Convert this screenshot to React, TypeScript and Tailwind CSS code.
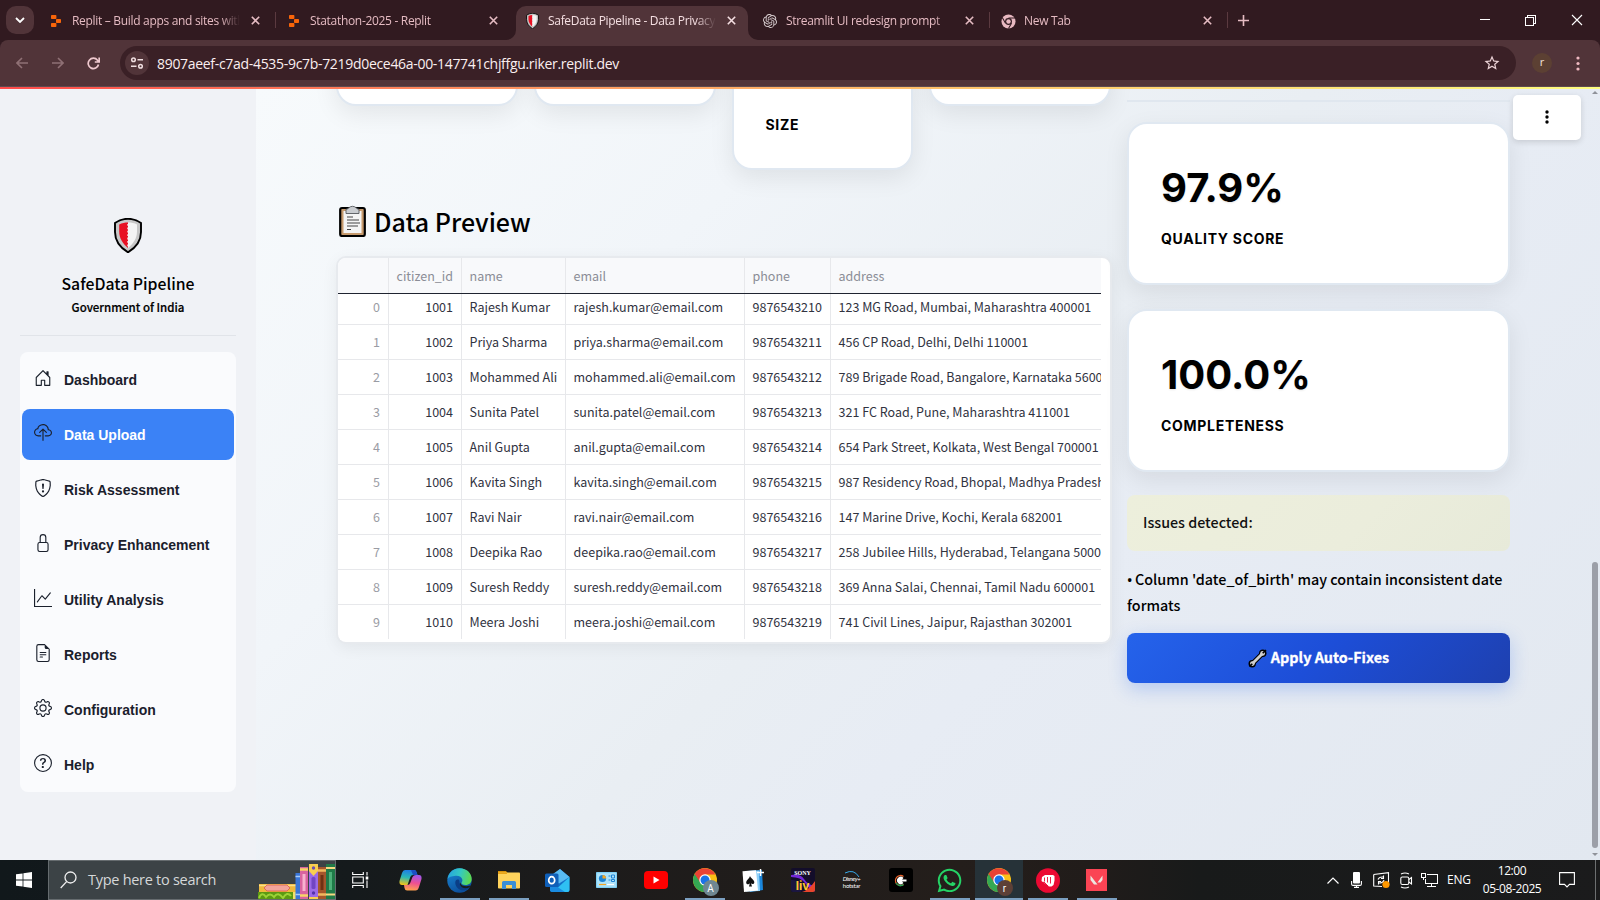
import React from "react";
import {
  BsHouseDoor,
  BsCloudUpload,
  BsShieldExclamation,
  BsLock,
  BsGraphUp,
  BsFileEarmarkText,
  BsGear,
  BsQuestionCircle,
} from "react-icons/bs";
import { SiOpenai } from "react-icons/si";
import { FaWhatsapp } from "react-icons/fa";
import { MdStarOutline } from "react-icons/md";

/* ---------- drawings ---------- */

function ReplitLogo() {
  return (
    <svg width="10" height="12" viewBox="0 0 10 12" fill="#f8650a">
      <rect x="0" y="0" width="5.4" height="4" rx="0.8" />
      <rect x="5" y="4" width="5" height="4" rx="0.8" />
      <rect x="0" y="8" width="5.4" height="4" rx="0.8" />
    </svg>
  );
}

function Shield({ className }: { className: string }) {
  return (
    <svg className={className} viewBox="0 0 28 35">
      <path d="M14 0.8C18 0.8 23 2 27 5V14C27 22 22 29.5 14 34.3C6 29.5 1 22 1 14V5C5 2 10 .8 14 .8Z" fill="#c8c8c8" stroke="#000" strokeWidth="1.9" />
      <path d="M14 4.6V30C8.5 25.500 5.200 20 5.200 13.500V6.600C8 5.200 11 4.600 14 4.600Z" fill="#e81123" />
      <path d="M14 4.600C17.500 4.600 20.500 5.200 23 6.600V13.500C23 20 19.500 25.500 14 30Z" fill="#f4f4f4" />
      <path d="M14.300 6V29" stroke="#f4f4f4" strokeWidth="2" strokeDasharray="1.8 1.600" />
    </svg>
  );
}

function ChromeMono() {
  return (
    <svg width="15" height="15" viewBox="0 0 16 16">
      <circle cx="8" cy="8" r="7.500" fill="#e8b9c1" />
      <circle cx="8" cy="8" r="3.700" fill="#311a20" />
      <circle cx="8" cy="8" r="2.400" fill="#e8b9c1" />
      <path d="M8 4.300H15M4.800 9.800L1.500 4M11.200 9.800L8 15.500" stroke="#311a20" strokeWidth="1.100" />
    </svg>
  );
}

function ChromeColor({ letter, badge }: { letter: string; badge: string }) {
  return (
    <div className="relative size-6">
      <svg width="24" height="24" viewBox="0 0 24 24">
        <circle cx="12" cy="12" r="12" fill="#fbc116" />
        <path d="M1.610 6A12 12 0 0 0 12 24L17.200 15L12 12Z" fill="#34a853" />
        <path d="M1.610 6L6.800 15L12 12Z" fill="#34a853" />
        <path d="M1.610 6A12 12 0 0 1 22.390 6.500H12L7 14Z" fill="#ea4335" />
        <circle cx="12" cy="12" r="5.700" fill="#fff" />
        <circle cx="12" cy="12" r="4.500" fill="#1a73e8" />
      </svg>
      <span
        className={
          "absolute -right-[2px] -bottom-[4px] flex size-4 items-center justify-center rounded-full font-['Roboto',sans-serif] text-[10px] text-white " +
          badge
        }
      >
        {letter}
      </span>
    </div>
  );
}

function Clipboard() {
  return (
    <svg width="27" height="32" viewBox="0 0 27 32">
      <rect x="1.200" y="3" width="24.600" height="28" rx="1.800" fill="#c69a6d" stroke="#000" strokeWidth="2.200" />
      <rect x="4.500" y="6" width="18" height="22" fill="#f4f4f4" />
      <path d="M7 4.300C9.500 4.300 10 1.300 13.500 1.300S17.500 4.300 20 4.300V8.500H7Z" fill="#c9ccd0" stroke="#55585c" strokeWidth="0.900" />
      <path d="M8 12H14M8 15H20M8 18H21M8 21H19M8 24.500H12" stroke="#444" strokeWidth="1.100" />
    </svg>
  );
}

function Wrench() {
  return (
    <svg width="19" height="19" viewBox="0 0 19 19">
      <path d="M4 15L15 4" stroke="#000" strokeWidth="5" />
      <circle cx="4.200" cy="14.800" r="3.700" fill="#000" />
      <circle cx="14.800" cy="4.200" r="3.700" fill="#000" />
      <path d="M4 15L15 4" stroke="#cfcfcf" strokeWidth="2.800" />
      <circle cx="4.400" cy="14.600" r="2.400" fill="#cfcfcf" />
      <circle cx="14.600" cy="4.400" r="2.400" fill="#cfcfcf" />
      <path d="M1.500 17.500L4.300 14.700M14.700 4.300L18 1" stroke="#000" strokeWidth="1.600" />
    </svg>
  );
}

function Books() {
  return (
    <svg width="77" height="36" viewBox="0 0 77 36">
      <rect x="1" y="21" width="37" height="8" fill="#f0b93c" />
      <path d="M1 22.500H38" stroke="#fbe08a" strokeWidth="1.500" />
      <path d="M9 22H29L32 25L29 28H9L6 25Z" fill="#f2a49b" stroke="#d9584f" strokeWidth="0.800" />
      <rect x="0" y="29" width="38" height="7" fill="#5c9a12" />
      <path d="M1 35Q4 28 8 34Q12 29 16 34Q20 28 25 35Q29 28 33 33" stroke="#9cd236" strokeWidth="2" fill="none" />
      <rect x="35" y="29" width="3" height="7" fill="#f3e06a" />
      <rect x="37.500" y="10" width="4.500" height="26" fill="#3a76d8" />
      <path d="M37.500 13.500H42M37.500 31.500H42" stroke="#a9cdf7" strokeWidth="1.500" />
      <rect x="42" y="4" width="8" height="32" fill="#d9639f" />
      <rect x="44.500" y="11" width="3" height="17" fill="#f7b1cf" />
      <path d="M42 6.500H50M42 32.500H50" stroke="#f8d468" strokeWidth="2.500" />
      <rect x="51" y="1" width="9" height="35" fill="#9b6ae6" />
      <path d="M51 1H60V8L55.500 13L51 8Z" fill="#f8cf4f" />
      <rect x="53.500" y="14" width="4" height="12" rx="1.500" fill="#7145c4" />
      <circle cx="55.500" cy="5" r="1.700" fill="#6c50b0" />
      <circle cx="55.500" cy="30" r="1.700" fill="#5532a8" />
      <path d="M51 35H60" stroke="#f8cf4f" strokeWidth="2" />
      <rect x="60" y="4" width="8" height="32" fill="#a5562c" />
      <rect x="62.500" y="12" width="3" height="15" fill="#6f3113" />
      <path d="M60 7.500H68M60 31.500H68" stroke="#f1b95e" strokeWidth="2.500" />
      <rect x="68" y="1" width="9" height="35" fill="#1f7a48" />
      <rect x="71" y="9" width="3" height="18" fill="#4eb079" />
      <path d="M68 5H77M68 31.500H77" stroke="#f5d982" strokeWidth="2" />
    </svg>
  );
}

function Edge() {
  return (
    <svg width="25" height="25" viewBox="0 0 25 25">
      <defs>
        <linearGradient id="edgeTop" x1="0" y1="0.300" x2="1" y2="0.500">
          <stop offset="0" stopColor="#26a5de" />
          <stop offset="0.500" stopColor="#34c9c2" />
          <stop offset="1" stopColor="#5fd94b" />
        </linearGradient>
        <linearGradient id="edgeLow" x1="0" y1="0" x2="0.500" y2="1">
          <stop offset="0" stopColor="#1b8bd8" />
          <stop offset="1" stopColor="#0c4f9c" />
        </linearGradient>
      </defs>
      <circle cx="12.500" cy="12.500" r="12.200" fill="url(#edgeLow)" />
      <path d="M.6 11C1.500 4.500 6.500 .3 12.500 .3C20 .3 24.700 5.500 24.700 11C24.700 14.800 22 17 18.500 17C15.500 17 14.300 15.800 14.500 14.800C14.800 13.900 15.700 13.500 15.300 11.500C14.800 9 12 7.500 8.500 7.800C4.500 8 1.500 9.500 .6 11Z" fill="url(#edgeTop)" />
      <path d="M8.300 14C8 19 12 22.500 17 22.300C19.500 22.200 21.500 21 22.700 19.500C20 21 14.500 20 13 16.500C12 14.300 13 12 11.500 11.500C9.500 11 8.400 12.500 8.300 14Z" fill="#0b3e86" />
      <path d="M13.500 14C13 17 17 19.300 23.500 17.500L22.300 19.600C18 21.500 13.500 19.500 12.800 16Z" fill="#1a1c1e" />
    </svg>
  );
}

function Copilot() {
  return (
    <svg width="23" height="22" viewBox="0 0 23 22">
      <defs>
        <linearGradient id="cpA" x1="0.500" y1="0" x2="0.300" y2="1">
          <stop offset="0" stopColor="#1e7be8" />
          <stop offset="0.500" stopColor="#2bb8b5" />
          <stop offset="1" stopColor="#f3c418" />
        </linearGradient>
        <linearGradient id="cpB" x1="0.600" y1="0" x2="0.400" y2="1">
          <stop offset="0" stopColor="#a057ea" />
          <stop offset="0.500" stopColor="#ee4f93" />
          <stop offset="1" stopColor="#ffa24d" />
        </linearGradient>
      </defs>
      <path d="M6 1H15Q17 1 17.500 3L18.500 6H14Q12 6 11.300 8L8.500 16H3Q0 16 .5 12L3 4Q4 1 6 1Z" fill="url(#cpA)" />
      <path d="M17 6H20Q23 6 22.500 10L20 18Q19 21.500 16.500 21.500H8Q6 21.500 5.500 19L5 16H8.500Q10.500 16 11.200 14L13.500 8Q14.500 6 17 6Z" fill="url(#cpB)" />
      <path d="M12 1H15Q17 1 17.500 3L18.500 6H14Z" fill="#1b4fc4" />
    </svg>
  );
}

function Explorer() {
  return (
    <svg width="22" height="20" viewBox="0 0 22 20">
      <path d="M0 1H8L10 3.500H0Z" fill="#d9920b" />
      <rect x="0" y="2.500" width="22" height="16" rx="0.800" fill="#ffd35c" />
      <path d="M0 2.500H9V4H0Z" fill="#e8a317" />
      <path d="M4 19V12.500Q4 11 5.500 11H16.500Q18 11 18 12.500V19H14V15H8V19Z" fill="#3b8fd6" />
    </svg>
  );
}

function Outlook() {
  return (
    <svg width="25" height="25" viewBox="0 0 25 25">
      <path d="M5 9L15 1L24.500 9V22Q24.500 24 22.500 24H8Q5 24 5 22Z" fill="#1471c9" />
      <path d="M8 6L15 1L24.500 9L14 15.500L8 12Z" fill="#58baf2" />
      <path d="M24.500 9V22Q24.500 24 22.500 24H8Z" fill="#2fc0f3" />
      <path d="M5 14L20 24H8Q5 24 5 22Z" fill="#1a8be0" />
      <rect x="0" y="5.500" width="13.500" height="13.500" rx="1.500" fill="#0f5fb8" />
      <ellipse cx="6.700" cy="12.200" rx="3" ry="3.500" fill="none" stroke="#fff" strokeWidth="1.700" />
    </svg>
  );
}

function ControlPanel() {
  return (
    <svg width="21" height="16" viewBox="0 0 21 16">
      <rect width="21" height="16" rx="0.800" fill="#7fd0f5" />
      <rect x="1.200" y="1.200" width="18.600" height="13.600" fill="#aee3fa" />
      <circle cx="6.500" cy="6.500" r="3.600" fill="#1c84d6" />
      <path d="M6.500 6.500V2.900A3.600 3.600 0 0 1 10.100 6.500Z" fill="#f5a623" />
      <path d="M12.500 4H14.500M12.500 8H14.500M15.500 3H18.500V6H15.500ZM15.500 7.500H18.500V9.500H15.500Z" stroke="#1c84d6" fill="none" />
      <path d="M3 12.500H10" stroke="#f5a623" strokeWidth="1.200" />
      <path d="M11 12.500H18" stroke="#fff" strokeWidth="1.200" />
    </svg>
  );
}

function YouTube() {
  return (
    <svg width="24" height="18" viewBox="0 0 24 18">
      <rect width="24" height="18" rx="4" fill="#f00" />
      <path d="M9.500 5.500L15.500 9L9.500 12.500Z" fill="#fff" />
    </svg>
  );
}

function Solitaire() {
  return (
    <svg width="23" height="25" viewBox="0 0 23 25">
      <path d="M6 3L20 2L21 22L8 24Z" fill="#1a86dc" />
      <path d="M3 3L17 2.500L18 23L4 23.500Z" fill="#8fd1f8" />
      <path d="M.5 3.200L14 2.200L16 22.500L2 24Z" fill="#fff" />
      <path d="M8 8C9 10.500 12.500 12 12.300 14.500C12 16.500 9.800 16.500 9 15.300L10 18.500H7L7.800 15.300C7 16.800 4.500 16.700 4.200 14.800C4 12.300 7.200 11 8 8Z" fill="#111" />
      <path d="M18.500 1V8M15 4.500H22" stroke="#fff" strokeWidth="1.500" />
    </svg>
  );
}

function SonyLiv() {
  return (
    <div className="relative flex h-6 w-6 flex-col items-center justify-between overflow-hidden rounded-[2px] bg-[#130d2a] font-bold">
      <svg className="absolute inset-0" width="24" height="24" viewBox="0 0 24 24">
        <path d="M0 9Q10 9 14 15T24 24V18Q17 17 13 11T0 7Z" fill="#7428d8" />
        <path d="M11 24Q18 22 24 13V24Z" fill="#e8452c" />
        <path d="M0 12Q8 11 12 18L10 24H0Z" fill="#1b1640" />
      </svg>
      <span className="relative font-['Liberation_Serif',serif] text-[6px] leading-[10px] text-white">SONY</span>
      <span className="relative font-['Inter',sans-serif] text-[12px] leading-[12px] text-[#ffc531]">liv</span>
    </div>
  );
}

function Hotstar() {
  return (
    <div className="relative flex h-6 w-6 flex-col items-center justify-center font-['Lato',sans-serif] text-[6px] leading-[7px] text-white">
      <svg className="absolute top-[2px] left-[4px]" width="16" height="8" viewBox="0 0 16 8">
        <path d="M1 3Q10 -1.500 15 7" stroke="#36a9e8" strokeWidth="1" fill="none" />
      </svg>
      <span className="pt-[3px] italic tracking-[-0.400px]">Disney+</span>
      <span className="tracking-[-0.200px]">hotstar</span>
    </div>
  );
}

function Cricket() {
  return (
    <div className="flex size-6 items-center justify-center rounded-[3px] bg-black">
      <svg width="13" height="13" viewBox="0 0 13 13">
        <path d="M9.500 2.500A5 5 0 1 0 9.500 10.500" stroke="#e8632b" strokeWidth="1.300" fill="none" />
        <path d="M2 9A5 5 0 0 0 9.500 10.500" stroke="#23a455" strokeWidth="1.300" fill="none" />
        <path d="M9.500 4A3.700 3.700 0 1 0 9.500 9L8 7.500H12.500V5.500H8Z" fill="#fff" />
      </svg>
    </div>
  );
}

function Fist() {
  return (
    <svg width="24" height="25" viewBox="0 0 24 25">
      <ellipse cx="12" cy="12.500" rx="12" ry="12.300" fill="#eb0a33" />
      <path d="M6 9L9 7L17 7L18.500 8V12.500L17.500 17L15.500 18.500H13L5.500 13Z" fill="#fff" />
      <path d="M8.500 9.500V13.500M11.500 9V14.500M14.500 9V15.500M5 16L8 14L12 18" stroke="#eb0a33" strokeWidth="0.900" fill="none" />
    </svg>
  );
}

function Valorant() {
  return (
    <svg width="21" height="22" viewBox="0 0 21 22">
      <rect width="21" height="22" fill="#fa4454" />
      <path d="M4.500 6.500L11.500 15.500H8L4.500 11ZM16.500 6.500V11L14.500 13.500H11.500Z" fill="#ece8e1" />
    </svg>
  );
}

/* ---------- browser chrome ---------- */

type Tab = { title: string; icon: React.ReactNode; active?: boolean; divider?: boolean };

const tabs: Tab[] = [
  { title: "Replit – Build apps and sites with AI", icon: <ReplitLogo />, divider: true },
  { title: "Statathon-2025 - Replit", icon: <ReplitLogo /> },
  { title: "SafeData Pipeline - Data Privacy Tool", icon: <Shield className="h-4 w-[13px]" />, active: true },
  { title: "Streamlit UI redesign prompt", icon: <SiOpenai size={14} color="#d9cfd1" />, divider: true },
  { title: "New Tab", icon: <ChromeMono />, divider: true },
];

function Cross({ color }: { color: string }) {
  return (
    <svg width="9" height="9" viewBox="0 0 9 9" stroke={color} strokeWidth="1.600">
      <path d="M.8 .8L8.200 8.200M8.200 .8L.8 8.200" />
    </svg>
  );
}

function TabItem({ tab }: { tab: Tab }) {
  return (
    <div className="relative flex h-[34px] w-[238px] shrink-0">
      <div
        className={
          "relative flex w-[232px] items-center rounded-t-[10px] pl-2 " +
          (tab.active ? "bg-[#513439] text-[#f5dfe2]" : "text-[#e6bcc3]")
        }
      >
        {tab.active && (
          <>
            <svg className="absolute bottom-0 -left-[10px]" width="10" height="10" viewBox="0 0 10 10">
              <path d="M10 0V10H0A10 10 0 0 0 10 0Z" fill="#513439" />
            </svg>
            <svg className="absolute -right-[10px] bottom-0" width="10" height="10" viewBox="0 0 10 10">
              <path d="M0 0V10H10A10 10 0 0 1 0 0Z" fill="#513439" />
            </svg>
          </>
        )}
        <span className="flex w-4 shrink-0 justify-center pb-[6px] pt-[2px]">{tab.icon}</span>
        <span className="ml-2 w-[168px] overflow-hidden whitespace-nowrap pb-[4px] font-['Open_Sans',sans-serif] text-[12px] leading-5 tracking-[-0.310px] [mask-image:linear-gradient(to_right,black_88%,transparent)]">
          {tab.title}
        </span>
        <span className="ml-[11px] pb-[5px]">
          <Cross color={tab.active ? "#f5dfe2" : "#e6bcc3"} />
        </span>
      </div>
      {tab.divider && <span className="mt-[6px] ml-[3px] h-4 w-px bg-[#5b3a40]" />}
    </div>
  );
}

function BrowserChrome() {
  return (
    <header className="relative z-10 h-[87px] shrink-0 bg-[#311a20]">
      <div className="flex h-10 items-start pt-[6px]">
        <div className="ml-[6px] flex size-7 shrink-0 items-center justify-center rounded-[10px] bg-[#513439]">
          <svg width="10" height="6" viewBox="0 0 10 6" fill="none" stroke="#fff" strokeWidth="1.800">
            <path d="M1 1L5 5L9 1" />
          </svg>
        </div>
        <div className="ml-[6px] flex">
          {tabs.map((t) => (
            <TabItem key={t.title} tab={t} />
          ))}
        </div>
        <svg className="mt-[9px] ml-[8px]" width="11" height="11" viewBox="0 0 11 11" stroke="#e6bcc3" strokeWidth="1.600">
          <path d="M5.500 0V11M0 5.500H11" />
        </svg>
        <div className="ml-auto flex items-center pt-[8px] pr-[17px] text-white">
          <svg width="10" height="12" viewBox="0 0 10 12" stroke="currentColor" shapeRendering="crispEdges">
            <path d="M0 5.500H10" />
          </svg>
          <svg className="ml-[35px]" width="11" height="12" viewBox="0 0 11 12" fill="none" stroke="currentColor" shapeRendering="crispEdges">
            <path d="M.5 3.500H8.500V11H.5ZM2.500 3.500V1H10.500V9H8.500" />
          </svg>
          <svg className="ml-[35px]" width="12" height="12" viewBox="0 0 12 12" stroke="currentColor" strokeWidth="1.100">
            <path d="M1 1L11 11M11 1L1 11" />
          </svg>
        </div>
      </div>
      <div className="flex h-[47px] items-center rounded-t-[8px] border-b border-[#5d4a50] bg-[#513439]">
        <svg className="ml-[16px]" width="12" height="12" viewBox="0 0 12 12" fill="none" stroke="#8f7075" strokeWidth="1.600">
          <path d="M12 6H1M6 1L1 6L6 11" />
        </svg>
        <svg className="ml-[24px]" width="12" height="12" viewBox="0 0 12 12" fill="none" stroke="#8f7075" strokeWidth="1.600">
          <path d="M0 6H11M6 1L11 6L6 11" />
        </svg>
        <svg className="ml-[23px]" width="13" height="13" viewBox="0 0 13 13" fill="none" stroke="#f0c9cf" strokeWidth="1.700">
          <path d="M11.500 7.500A5.200 5.200 0 1 1 10.500 3.200L12 5M12.200 .5V5H7.800" />
        </svg>
        <div className="ml-[20px] flex h-[34px] w-[1396px] items-center rounded-full bg-[#3a2026]">
          <span className="ml-[5px] flex size-6 items-center justify-center rounded-full bg-[#513439]">
            <svg width="14" height="12" viewBox="0 0 14 12" fill="none" stroke="#f0dfe1" strokeWidth="1.500">
              <circle cx="3.500" cy="2.700" r="1.800" />
              <circle cx="10.500" cy="9.300" r="1.800" />
              <path d="M7.500 2.700H13M1 9.300H6.500" />
            </svg>
          </span>
          <span className="ml-2 whitespace-nowrap font-['Open_Sans',sans-serif] text-[14px] tracking-[-0.310px] text-[#fbeff0]">
            8907aeef-c7ad-4535-9c7b-7219d0ece46a-00-147741chjffgu.riker.replit.dev
          </span>
          <MdStarOutline className="mr-[15px] ml-auto" size={18} color="#ecd3d7" />
        </div>
        <span className="ml-4 flex size-5 items-center justify-center rounded-full bg-[#5c4033] pb-px font-['Open_Sans',sans-serif] text-[11px] text-[#f3e2d8]">
          r
        </span>
        <svg className="ml-[24px]" width="4" height="15" viewBox="0 0 4 15" fill="#efb9c1">
          <circle cx="2" cy="2" r="1.600" />
          <circle cx="2" cy="7.500" r="1.600" />
          <circle cx="2" cy="13" r="1.600" />
        </svg>
      </div>
    </header>
  );
}

/* ---------- sidebar ---------- */

const menu = [
  { label: "Dashboard", Icon: BsHouseDoor },
  { label: "Data Upload", Icon: BsCloudUpload, active: true },
  { label: "Risk Assessment", Icon: BsShieldExclamation },
  { label: "Privacy Enhancement", Icon: BsLock },
  { label: "Utility Analysis", Icon: BsGraphUp },
  { label: "Reports", Icon: BsFileEarmarkText },
  { label: "Configuration", Icon: BsGear },
  { label: "Help", Icon: BsQuestionCircle },
];

function Sidebar() {
  return (
    <aside className="flex w-64 shrink-0 flex-col bg-[#f0f2f6] px-5 font-['Noto_Sans_CJK_SC',sans-serif]">
      <Shield className="mt-[129px] h-[35px] w-7 self-center" />
      <h2 className="mt-[19px] text-center text-[15.800px] leading-6 font-medium text-black">SafeData Pipeline</h2>
      <p className="mt-px text-center text-[11.500px] leading-5 font-medium text-black [-webkit-text-stroke:0.200px_black]">
        Government of India
      </p>
      <hr className="mt-[18px] border-t border-[#e1e4e9]" />
      <nav className="mt-[16px] flex h-[440px] flex-col gap-1 rounded-lg bg-[#fafbfd] px-[2px] pt-[2px]">
        {menu.map(({ label, Icon, active }) => (
          <a
            key={label}
            className={
              "flex h-[51px] shrink-0 items-center rounded-lg pl-3 font-['Liberation_Sans',Arial,sans-serif] text-[14px] font-bold " +
              (active ? "bg-[#3b82f6] text-white" : "text-[#1a202c]")
            }
          >
            <Icon size={18} color="#1a202c" className="mb-1" />
            <span className="mt-[2px] ml-3">{label}</span>
          </a>
        ))}
      </nav>
    </aside>
  );
}

/* ---------- main content ---------- */

const rows = [
  ["1001", "Rajesh Kumar", "rajesh.kumar@email.com", "9876543210", "123 MG Road, Mumbai, Maharashtra 400001"],
  ["1002", "Priya Sharma", "priya.sharma@email.com", "9876543211", "456 CP Road, Delhi, Delhi 110001"],
  ["1003", "Mohammed Ali", "mohammed.ali@email.com", "9876543212", "789 Brigade Road, Bangalore, Karnataka 560001"],
  ["1004", "Sunita Patel", "sunita.patel@email.com", "9876543213", "321 FC Road, Pune, Maharashtra 411001"],
  ["1005", "Anil Gupta", "anil.gupta@email.com", "9876543214", "654 Park Street, Kolkata, West Bengal 700001"],
  ["1006", "Kavita Singh", "kavita.singh@email.com", "9876543215", "987 Residency Road, Bhopal, Madhya Pradesh 462001"],
  ["1007", "Ravi Nair", "ravi.nair@email.com", "9876543216", "147 Marine Drive, Kochi, Kerala 682001"],
  ["1008", "Deepika Rao", "deepika.rao@email.com", "9876543217", "258 Jubilee Hills, Hyderabad, Telangana 500001"],
  ["1009", "Suresh Reddy", "suresh.reddy@email.com", "9876543218", "369 Anna Salai, Chennai, Tamil Nadu 600001"],
  ["1010", "Meera Joshi", "meera.joshi@email.com", "9876543219", "741 Civil Lines, Jaipur, Rajasthan 302001"],
];

const grid = "grid grid-cols-[51px_73px_104px_179px_86px_270px] w-[763px]";
const cell = "overflow-hidden whitespace-nowrap border-r border-[#e7e8eb] pl-[7.500px] pr-2 pt-[2px] flex items-center";
const lastCell = "overflow-hidden whitespace-nowrap pl-[7.500px] pt-[2px] flex items-center";

function DataTable() {
  return (
    <div className="-ml-px h-[388px] w-[776px] shrink-0 overflow-hidden rounded-[10px] border-2 border-[#e7eaee] bg-white font-['Noto_Sans_CJK_SC',sans-serif] text-[12.520px] text-[#31333f] shadow-[0_4px_16px_rgba(0,0,0,0.06)]">
      <div className={grid + " h-9 border-b border-[#1f2430] bg-[#f8f9fb] text-[#8b8d96]"}>
        <div className={cell} />
        <div className={cell + " pr-0"}>citizen_id</div>
        <div className={cell}>name</div>
        <div className={cell}>email</div>
        <div className={cell}>phone</div>
        <div className={lastCell}>address</div>
      </div>
      {rows.map(([id, name, email, phone, address], i) => (
        <div
          key={id}
          className={
            "flex w-[763px] items-end overflow-hidden border-b " +
            (i === 0 ? "h-[31px] " : "h-[35px] ") +
            (i < 9 ? "border-[#e7e8eb]" : "border-white")
          }
        >
          <div className={grid + " h-[35px] shrink-0"}>
            <div className={cell + " justify-end text-[#9a9ca4]"}>{i}</div>
            <div className={cell + " justify-end"}>{id}</div>
            <div className={cell}>{name}</div>
            <div className={cell}>{email}</div>
            <div className={cell}>{phone}</div>
            <div className={lastCell}>{address}</div>
          </div>
        </div>
      ))}
    </div>
  );
}

const cardFrame =
  "border-2 border-[#e0e8f1] bg-white shadow-[0_8px_24px_rgba(0,0,0,0.08)]";

function MetricCard({ value, label }: { value: string; label: string }) {
  return (
    <div className={cardFrame + " h-[163px] rounded-[20px] pt-[39px] pl-8 font-['Inter',sans-serif] text-black"}>
      <div className="text-[40px] leading-[50px] font-bold [text-shadow:0_1px_2px_rgba(0,0,0,0.1)]">{value}</div>
      <div className="mt-[16px] text-[14px] leading-5 font-bold tracking-[0.7px]">{label}</div>
    </div>
  );
}

function Main() {
  return (
    <main className="relative flex flex-1 gap-[17px] bg-[linear-gradient(135deg,#f7fafc_0%,#f1f5f9_27%,#e9eef3_50%,#e7ecf4_62%,#e2e8f0_100%)] pl-[81px] font-['Noto_Sans_CJK_SC',sans-serif] text-black">
      <section className="flex w-[773px] flex-col">
        <div className="-ml-px grid h-[81px] w-[775px] grid-cols-4 items-start gap-4">
          <div className={cardFrame + " -mt-8 h-[49px] rounded-b-[20px]"} />
          <div className={cardFrame + " -mt-8 h-[49px] rounded-b-[20px]"} />
          <div className={cardFrame + " -mt-8 h-[113px] rounded-b-[20px] pt-[56px] pl-8 font-['Inter',sans-serif] text-[14px] leading-5 font-bold tracking-[0.7px]"}>
            SIZE
          </div>
          <div className={cardFrame + " -mt-8 h-[49px] rounded-b-[20px]"} />
        </div>
        <h3 className="flex h-[86px] items-center gap-[8px] pt-4 pl-[2px] text-[25px] font-medium">
          <span>
            <Clipboard />
          </span>
          <span className="leading-9">Data Preview</span>
        </h3>
        <DataTable />
      </section>

      <section className="flex w-[383px] flex-col">
        <div className="mt-[11px] h-[2px] bg-[#e0e7ef]" />
        <div className="mt-5 flex flex-col gap-6">
          <MetricCard value="97.9%" label="QUALITY SCORE" />
          <MetricCard value="100.0%" label="COMPLETENESS" />
        </div>
        <div className="mt-[23px] flex h-[56px] items-center rounded-lg bg-[linear-gradient(135deg,#edefdc,#ebeddc_60%,#e7ead9)] pb-[2px] pl-4 text-[14.300px] font-medium text-[#111]">
          Issues detected:
        </div>
        <p className="mt-[15px] h-[52px] text-[14.350px] leading-[25.600px] font-medium">
          <span className="inline-block w-2 font-['Noto_Sans',sans-serif] leading-4">•</span>
          Column 'date_of_birth' may contain inconsistent date formats
        </p>
        <button className="mt-[15px] flex h-[50px] items-center justify-center gap-[4px] rounded-lg bg-[linear-gradient(135deg,#2563eb_0%,#1d4ed8_50%,#1e40af_100%)] text-[14.400px] font-bold text-white shadow-[0_6px_18px_rgba(37,99,235,0.25)]">
          <Wrench />
          <span className="pb-[2px] [-webkit-text-stroke:0.300px_white]">Apply Auto-Fixes</span>
        </button>
      </section>

      <button className="absolute top-[6px] right-[19px] flex h-[45px] w-[68px] items-center justify-center rounded-[5px] bg-white pb-px shadow-[0_2px_6px_rgba(0,0,0,0.14)]">
        <svg width="4" height="14" viewBox="0 0 4 14">
          <circle cx="2" cy="2" r="1.700" />
          <circle cx="2" cy="7" r="1.700" />
          <circle cx="2" cy="12" r="1.700" />
        </svg>
      </button>

      <div className="absolute inset-y-0 right-[2px] flex w-[6px] flex-col items-center">
        <svg className="mt-[2px]" width="6" height="3" viewBox="0 0 6 3" fill="#8f9299">
          <path d="M0 3L3 0L6 3Z" />
        </svg>
        <div className="mt-[468px] h-[286px] w-[6px] rounded-full bg-[#9c9fa8]" />
        <svg className="mt-[5px]" width="6" height="3" viewBox="0 0 6 3" fill="#8f9299">
          <path d="M0 0L3 3L6 0Z" />
        </svg>
      </div>
    </main>
  );
}

/* ---------- taskbar ---------- */

function TaskView() {
  return (
    <svg className="mr-[2px]" width="17" height="16" viewBox="0 0 17 16" fill="none" stroke="#fff" strokeWidth="1.100">
      <path d="M.7 0V2.500H11.300V0M.7 5H11.300V11H.7ZM.7 16V13.500H11.300V16M15 0V3.500M15 8.500V16" />
      <rect x="13.700" y="4.500" width="2.600" height="3" fill="#fff" stroke="none" />
    </svg>
  );
}

const apps: { name: string; icon: React.ReactNode; line?: string; active?: boolean }[] = [
  { name: "taskview", icon: <TaskView /> },
  { name: "copilot", icon: <Copilot /> },
  { name: "edge", icon: <Edge />, line: "w-10" },
  { name: "explorer", icon: <Explorer />, line: "w-10" },
  { name: "outlook", icon: <Outlook /> },
  { name: "control", icon: <ControlPanel /> },
  { name: "youtube", icon: <YouTube /> },
  { name: "chromeA", icon: <ChromeColor letter="A" badge="bg-[#6f8792]" />, line: "w-10" },
  { name: "solitaire", icon: <Solitaire /> },
  { name: "sony", icon: <SonyLiv /> },
  { name: "hotstar", icon: <Hotstar /> },
  { name: "cricket", icon: <Cricket /> },
  { name: "whatsapp", icon: <FaWhatsapp size={27} color="#25d366" />, line: "w-10" },
  { name: "chromeR", icon: <ChromeColor letter="r" badge="bg-[#5d4037]" />, line: "w-12", active: true },
  { name: "fist", icon: <Fist />, line: "w-10" },
  { name: "valorant", icon: <Valorant />, line: "w-10" },
];

function Taskbar() {
  return (
    <footer className="flex h-10 shrink-0 bg-[linear-gradient(to_right,#11181b_0%,#151a1c_22%,#1c1b1b_35%,#241e1b_60%,#211c1a_68%,#181a1a_75%,#1b1b1c_100%)] font-['Open_Sans',sans-serif] text-white">
      <div className="flex w-12 items-center justify-center">
        <svg width="16" height="16" viewBox="0 0 16 16" fill="#fff">
          <path d="M0 2.300L6.600 1.400V7.600H0ZM7.400 1.200L16 0V7.600H7.400ZM0 8.400H6.600V14.600L0 13.700ZM7.400 8.400H16V16L7.400 14.800Z" />
        </svg>
      </div>
      <div className="flex w-[288px] items-center border border-[#666c6f] bg-[#3c4346] pl-[11px]">
        <svg width="17" height="18" viewBox="0 0 17 18" fill="none" stroke="#f0f0f0" strokeWidth="1.300">
          <circle cx="10.500" cy="6.500" r="5.500" />
          <path d="M6.600 10.600L.7 17" />
        </svg>
        <span className="ml-[11px] whitespace-nowrap text-[14.500px] tracking-[-0.280px] text-[#d5d8d9]">Type here to search</span>
        <span className="ml-auto self-end">
          <Books />
        </span>
      </div>
      <div className="ml-px flex">
        {apps.map((a) => (
          <div key={a.name} className="flex w-[49px] flex-col items-center">
            <div className={"flex h-[38px] w-12 items-center justify-center pt-[2px] " + (a.active ? "bg-[#263238]" : "")}>
              {a.icon}
            </div>
            {a.line && <div className={"h-[2px] bg-[#7b9fc0] " + a.line} />}
          </div>
        ))}
      </div>
      <div className="ml-auto flex items-center text-[12px]">
        <svg width="12" height="7" viewBox="0 0 12 7" fill="none" stroke="#fff" strokeWidth="1.200">
          <path d="M.5 6.500L6 1L11.500 6.500" />
        </svg>
        <svg className="ml-[12px]" width="11" height="16" viewBox="0 0 11 16">
          <rect x="2" y="0" width="7" height="11.500" rx="1" fill="#fff" />
          <path d="M.6 9V12Q.6 13.400 2 13.400H9Q10.400 13.400 10.400 12V9M5.500 13.400V15.400M3 15.400H8" stroke="#fff" fill="none" strokeWidth="1.100" />
        </svg>
        <svg className="ml-[11px]" width="18" height="17" viewBox="0 0 18 17" fill="none" stroke="#fff" strokeWidth="1.100">
          <path d="M.7 2.500L15.500 .7V13M.7 2.500V14L9 14.500" />
          <path d="M5 7.500Q6 4.500 10.500 5M10.500 3.500V6.500H8M11 8Q10 11 6 11M5.500 12.500V9.500H8" />
          <circle cx="13" cy="12.500" r="3.600" fill="#ff9800" stroke="none" />
        </svg>
        <svg className="ml-[9px]" width="13" height="17" viewBox="0 0 13 17" fill="none" stroke="#fff" strokeWidth="1.100">
          <path d="M1 2Q5 0 9 2M1 15Q5 17 9 15" />
          <rect x=".8" y="5" width="8" height="7.500" rx="1.500" />
          <path d="M8.800 7.500L11.500 5.500V12L8.800 10" />
        </svg>
        <svg className="ml-[8px]" width="17" height="14" viewBox="0 0 17 14" fill="none" stroke="#fff" strokeWidth="1.100" shapeRendering="crispEdges">
          <path d="M6 1.500H16.500V10.500H4.500V6M10.500 10.500V13.500M6 13.500H15M.5 .5H4.500V4.500H.5ZM2.500 4.500V7" />
        </svg>
        <span className="ml-[9px] w-[24px] text-[12px] tracking-[-0.200px]">ENG</span>
        <div className="ml-[11px] flex w-[60px] flex-col items-center text-[12px] leading-[18px] tracking-[-0.400px]">
          <span>12:00</span>
          <span>05-08-2025</span>
        </div>
        <svg className="ml-[17px]" width="16" height="16" viewBox="0 0 16 16" fill="none" stroke="#fff" strokeWidth="1.100">
          <path d="M.6 .6H15.400V12.400H10.500L8 15L5.500 12.400H.6Z" />
        </svg>
        <span className="ml-[20px] mr-[4px] h-10 w-px bg-[#6d6f70]" />
      </div>
    </footer>
  );
}

export default function App() {
  return (
    <div className="flex h-[900px] w-[1600px] flex-col overflow-hidden bg-white">
      <BrowserChrome />
      <div className="relative z-10 h-[2px] shrink-0 bg-[linear-gradient(to_right,#ff4b4b,#ff9a62_35%,#ffc46b_60%,#fffd80)]" />
      <div className="flex min-h-0 flex-1">
        <Sidebar />
        <Main />
      </div>
      <Taskbar />
    </div>
  );
}
